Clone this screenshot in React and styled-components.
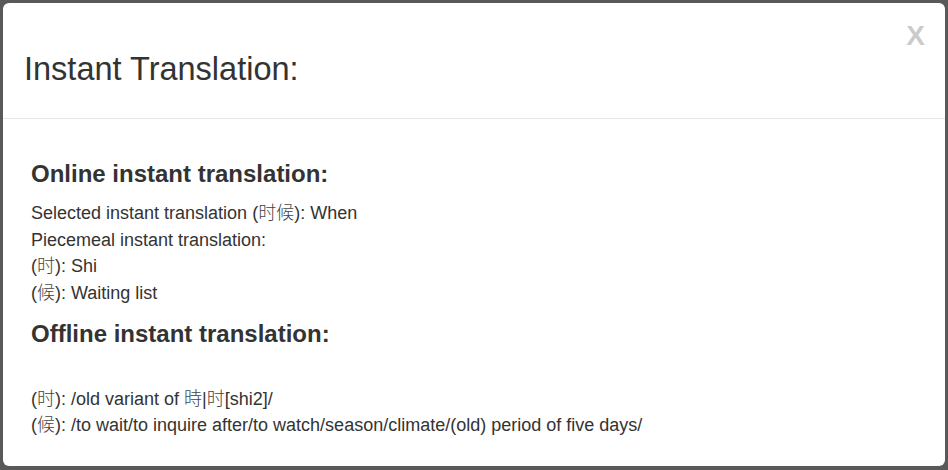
import React from 'react';
import styled, { createGlobalStyle } from 'styled-components';

const GlobalStyle = createGlobalStyle`
  html, body {
    margin: 0;
    padding: 0;
    background: #595959;
  }
  body {
    font-family: 'Liberation Sans', Arial, 'Noto Sans CJK SC', sans-serif;
    color: #333;
  }
`;

const Backdrop = styled.div`
  width: 948px;
  height: 470px;
  padding: 3px;
  box-sizing: border-box;
`;

const Dialog = styled.div`
  height: 463px;
  background: #fff;
  border-radius: 6px;
  display: flex;
  flex-direction: column;
  overflow: hidden;
`;

const Header = styled.div`
  display: flex;
  align-items: flex-start;
  justify-content: space-between;
  height: 116px;
  box-sizing: border-box;
  padding: 0 20px 0 21px;
  border-bottom: 1px solid #e5e5e5;
`;

const Title = styled.h2`
  margin: 46px 0 0;
  font-size: 32.5px;
  font-weight: normal;
  line-height: 40px;
  color: #333;
`;

const Close = styled.button`
  margin-top: 18px;
  padding: 0;
  border: 0;
  background: none;
  font-family: 'Liberation Sans', Arial, sans-serif;
  font-size: 28px;
  font-weight: bold;
  line-height: 30px;
  color: #000;
  opacity: 0.2;
  cursor: pointer;
`;

const Body = styled.div`
  padding: 40px 28px 0;
`;

const SectionTitle = styled.h3`
  margin: 0 0 ${p => p.gap}px;
  font-size: 24px;
  font-weight: bold;
  line-height: 30px;
  color: #333;
`;

const Line = styled.div`
  font-size: 18px;
  line-height: 26.67px;
  color: #333;
`;

const Spacer = styled.div`
  height: ${p => p.h}px;
`;

const Han = styled.span`
  font-family: 'Noto Sans CJK SC', sans-serif;
  font-weight: 300;
  line-height: 1;
  color: #444;
`;

export default function App() {
  return (
    <>
      <GlobalStyle />
      <Backdrop>
        <Dialog>
          <Header>
            <Title>Instant Translation:</Title>
            <Close>X</Close>
          </Header>
          <Body>
            <SectionTitle gap={11}>Online instant translation:</SectionTitle>
            <Line>Selected instant translation (<Han>时候</Han>): When</Line>
            <Line>Piecemeal instant translation:</Line>
            <Line>(<Han>时</Han>): Shi</Line>
            <Line>(<Han>候</Han>): Waiting list</Line>
            <Spacer h={12} />
            <SectionTitle gap={37}>Offline instant translation:</SectionTitle>
            <Line>(<Han>时</Han>): /old variant of <Han>時</Han>|<Han>时</Han>[shi2]/</Line>
            <Line>(<Han>候</Han>): /to wait/to inquire after/to watch/season/climate/(old) period of five days/</Line>
          </Body>
        </Dialog>
      </Backdrop>
    </>
  );
}
